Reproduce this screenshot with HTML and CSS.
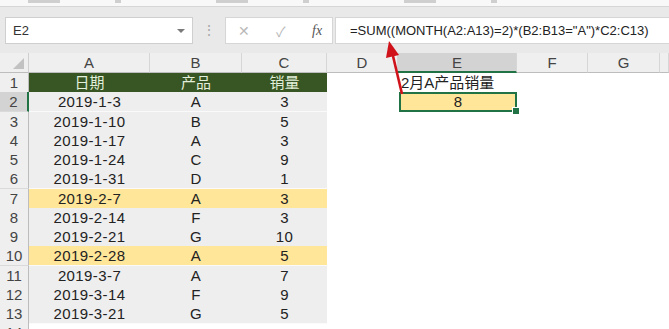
FILE: index.html
```html
<!DOCTYPE html>
<html lang="zh">
  <head>
    <meta charset="UTF-8" />
    <title>2月A产品销量</title>
    <link rel="stylesheet" href="styles.css">
  </head>
  <body>
    <div class="ribbon">
      <span class="rb-bit wide"></span>
      <span class="rb-bit"></span>
      <span class="rb-bit wide"></span>
      <span class="rb-bit"></span>
      <span class="rb-bit wide"></span>
      <span class="rb-bit"></span>
    </div>

    <div class="formula-bar">
      <div class="name-box">
        <span>E2</span>
        <span class="drop"></span>
      </div>
      <div class="grip">⋮</div>
      <div class="fx-buttons">
        <span class="btn-x">✕</span>
        <span class="btn-ok">✓</span>
        <span class="btn-fx">fx</span>
      </div>
      <div class="formula">=SUM((MONTH(A2:A13)=2)*(B2:B13="A")*C2:C13)</div>
    </div>

    <div class="sheet">
      <div class="row col-heads">
        <div class="corner"><span class="tri"></span></div>
        <div class="ch">A</div>
        <div class="ch">B</div>
        <div class="ch">C</div>
        <div class="ch">D</div>
        <div class="ch ch-sel">E</div>
        <div class="ch">F</div>
        <div class="ch">G</div>
        <div class="ch"></div>
      </div>

      <div class="row">
        <div class="rh">1</div>
        <div class="c head">日期</div>
        <div class="c head">产品</div>
        <div class="c head">销量</div>
        <div class="c"></div>
        <div class="c label">2月A产品销量</div>
        <div class="c"></div><div class="c"></div><div class="c"></div>
      </div>

      <div class="row">
        <div class="rh rh-sel">2</div>
        <div class="c t">2019-1-3</div>
        <div class="c t">A</div>
        <div class="c t">3</div>
        <div class="c"></div>
        <div class="c result">8<span class="handle"></span></div>
        <div class="c"></div><div class="c"></div><div class="c"></div>
      </div>

      <div class="row">
        <div class="rh">3</div>
        <div class="c t">2019-1-10</div>
        <div class="c t">B</div>
        <div class="c t">5</div>
        <div class="c"></div><div class="c"></div><div class="c"></div><div class="c"></div><div class="c"></div>
      </div>

      <div class="row">
        <div class="rh">4</div>
        <div class="c t">2019-1-17</div>
        <div class="c t">A</div>
        <div class="c t">3</div>
        <div class="c"></div><div class="c"></div><div class="c"></div><div class="c"></div><div class="c"></div>
      </div>

      <div class="row">
        <div class="rh">5</div>
        <div class="c t">2019-1-24</div>
        <div class="c t">C</div>
        <div class="c t">9</div>
        <div class="c"></div><div class="c"></div><div class="c"></div><div class="c"></div><div class="c"></div>
      </div>

      <div class="row">
        <div class="rh">6</div>
        <div class="c t">2019-1-31</div>
        <div class="c t">D</div>
        <div class="c t">1</div>
        <div class="c"></div><div class="c"></div><div class="c"></div><div class="c"></div><div class="c"></div>
      </div>

      <div class="row">
        <div class="rh">7</div>
        <div class="c t hl">2019-2-7</div>
        <div class="c t hl">A</div>
        <div class="c t hl">3</div>
        <div class="c"></div><div class="c"></div><div class="c"></div><div class="c"></div><div class="c"></div>
      </div>

      <div class="row">
        <div class="rh">8</div>
        <div class="c t">2019-2-14</div>
        <div class="c t">F</div>
        <div class="c t">3</div>
        <div class="c"></div><div class="c"></div><div class="c"></div><div class="c"></div><div class="c"></div>
      </div>

      <div class="row">
        <div class="rh">9</div>
        <div class="c t">2019-2-21</div>
        <div class="c t">G</div>
        <div class="c t">10</div>
        <div class="c"></div><div class="c"></div><div class="c"></div><div class="c"></div><div class="c"></div>
      </div>

      <div class="row">
        <div class="rh">10</div>
        <div class="c t hl">2019-2-28</div>
        <div class="c t hl">A</div>
        <div class="c t hl">5</div>
        <div class="c"></div><div class="c"></div><div class="c"></div><div class="c"></div><div class="c"></div>
      </div>

      <div class="row">
        <div class="rh">11</div>
        <div class="c t">2019-3-7</div>
        <div class="c t">A</div>
        <div class="c t">7</div>
        <div class="c"></div><div class="c"></div><div class="c"></div><div class="c"></div><div class="c"></div>
      </div>

      <div class="row">
        <div class="rh">12</div>
        <div class="c t">2019-3-14</div>
        <div class="c t">F</div>
        <div class="c t">9</div>
        <div class="c"></div><div class="c"></div><div class="c"></div><div class="c"></div><div class="c"></div>
      </div>

      <div class="row">
        <div class="rh">13</div>
        <div class="c t">2019-3-21</div>
        <div class="c t">G</div>
        <div class="c t">5</div>
        <div class="c"></div><div class="c"></div><div class="c"></div><div class="c"></div><div class="c"></div>
      </div>

      <div class="row">
        <div class="rh">14</div>
        <div class="c"></div><div class="c"></div><div class="c"></div><div class="c"></div><div class="c"></div><div class="c"></div><div class="c"></div><div class="c"></div>
      </div>
    </div>

    <!-- red arrow from E2 to the formula -->
    <svg class="arrow" width="669" height="329" viewBox="0 0 669 329">
      <line x1="402" y1="94" x2="393" y2="56" stroke="#d0121b" stroke-width="2.6" />
      <polygon points="389,41 399,55 386,58" fill="#d0121b" />
    </svg>
  </body>
</html>
```

FILE: styles.css
```css
body {
  margin: 0;
  width: 669px;
  height: 329px;
  overflow: hidden;
  background-color: white;
  font-family: "Liberation Sans", "Noto Sans CJK SC", sans-serif;
  color: #222;
  position: relative;
}

/* remains of the ribbon */
.ribbon {
  height: 6px;
  background-color: #f8f8f8;
  border-bottom: 1px solid #d6d6d6;
  display: flex;
  align-items: flex-start;
  padding-left: 28px;
  gap: 0;
}
.rb-bit {
  width: 6px;
  height: 3px;
  margin-right: 95px;
  background-color: #cfcfcf;
}
.rb-bit.wide {
  width: 32px;
  margin-right: 55px;
}

/* formula bar */
.formula-bar {
  height: 46px;
  background-color: #e9e9e9;
  display: flex;
  align-items: flex-start;
  padding: 10px 0 0 5px;
  box-sizing: border-box;
}
.name-box {
  width: 188px;
  height: 27px;
  box-sizing: border-box;
  background-color: white;
  border: 1px solid #cfcfcf;
  display: flex;
  align-items: center;
  justify-content: space-between;
  padding: 0 7px 0 7px;
  font-size: 13px;
  color: #333;
}
.drop {
  width: 0;
  height: 0;
  border-left: 4px solid transparent;
  border-right: 4px solid transparent;
  border-top: 4px solid #7a7a7a;
}
.grip {
  width: 32px;
  text-align: center;
  color: #a8a8a8;
  font-size: 14px;
  line-height: 27px;
}
.fx-buttons {
  width: 108px;
  height: 27px;
  box-sizing: border-box;
  background-color: white;
  border: 1px solid #d6d6d6;
  display: flex;
  align-items: center;
  padding-left: 12px;
}
.btn-x {
  width: 38px;
  color: #b9b9b9;
  font-size: 14px;
}
.btn-ok {
  width: 36px;
  color: #b9b9b9;
  font-size: 14px;
}
.btn-fx {
  font-family: "Liberation Serif", serif;
  font-style: italic;
  font-size: 14px;
  color: #555;
}
.formula {
  flex: 1;
  height: 27px;
  box-sizing: border-box;
  margin-left: 2px;
  background-color: white;
  border: 1px solid #d6d6d6;
  border-right: none;
  padding-left: 14px;
  font-size: 13px;
  line-height: 25px;
  color: #222;
  white-space: nowrap;
}

/* sheet grid */
.row {
  display: grid;
  grid-template-columns: 29px 121px 92px 85px 71px 119px 71px 72px 1fr;
  height: 19.25px;
  background-color: white;
}
.col-heads {
  height: 20px;
  background-color: #efefef;
}
.corner {
  background-color: #efefef;
  border-right: 1px solid #cfcfcf;
  border-bottom: 1px solid #bdbdbd;
  position: relative;
}
.tri {
  position: absolute;
  right: 4px;
  bottom: 3px;
  width: 0;
  height: 0;
  border-left: 11px solid transparent;
  border-bottom: 11px solid #c2c2c2;
}
.ch {
  background-color: #efefef;
  border-right: 1px solid #d6d6d6;
  border-bottom: 1px solid #bdbdbd;
  text-align: center;
  font-size: 15px;
  line-height: 20px;
  color: #444;
  overflow: hidden;
}
.ch-sel {
  background-color: #d3d3d3;
  border-bottom: 2px solid #217346;
}

.rh {
  background-color: #efefef;
  border-right: 1px solid #bdbdbd;
  border-bottom: 1px solid #dadada;
  box-sizing: border-box;
  text-align: center;
  font-size: 15px;
  line-height: 19px;
  color: #444;
  overflow: hidden;
}
.rh-sel {
  background-color: #d3d3d3;
  border-right: 2px solid #217346;
}

.c {
  font-size: 15px;
  line-height: 19px;
  white-space: nowrap;
}
.head {
  background-color: #375623;
  color: #e2efda;
  text-align: center;
  line-height: 20px;
}
.t {
  background-color: #eeeeee;
  border-bottom: 1px solid #fafafa;
  box-sizing: border-box;
  text-align: center;
  color: #222;
  letter-spacing: 0.4px;
}
.t.hl {
  background-color: #ffe699;
}
.label {
  padding-left: 3px;
  color: #222;
  line-height: 20px;
}
.result {
  position: relative;
  background-color: #ffe699;
  border: 2px solid #217346;
  box-sizing: border-box;
  text-align: center;
  line-height: 15px;
  margin-left: 1px;
}
.handle {
  position: absolute;
  right: -5px;
  bottom: -5px;
  width: 6px;
  height: 6px;
  background-color: #217346;
  border: 1px solid white;
}

.arrow {
  position: absolute;
  left: 0;
  top: 0;
  pointer-events: none;
}
```
